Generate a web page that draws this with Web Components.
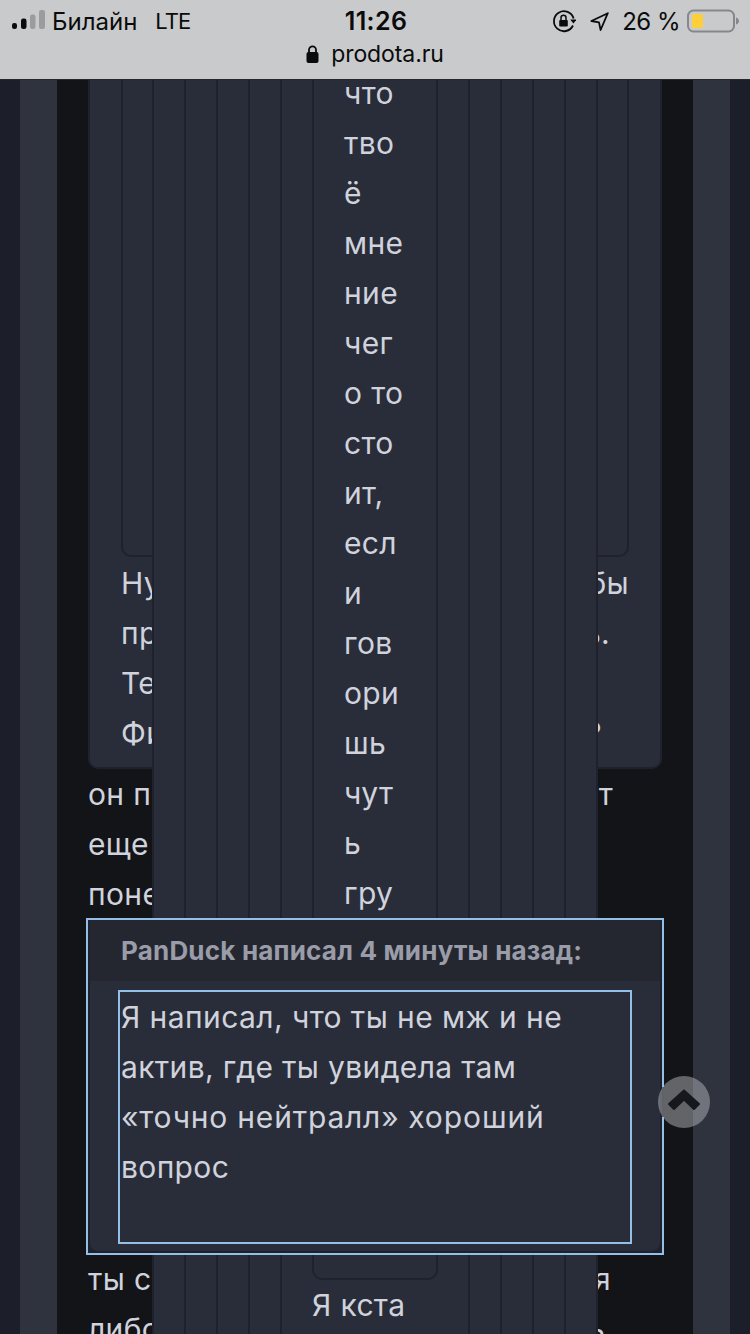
<!DOCTYPE html>
<html lang="ru">
<head>
<meta charset="utf-8">
<title>prodota.ru</title>
<style>
    html, body { margin: 0; padding: 0; background: #1c1f2a; }
    body { width: 750px; height: 1334px; overflow: hidden; font-family: Inter, "Liberation Sans", sans-serif; }
</style>
</head>
<body>
<status-bar></status-bar>
<forum-page>
    <quote-card>
        <text-line><span>Ну</span><span slot="end">бы</span></text-line>
        <text-line><span>пр</span><span slot="end" style="margin-right:19px">ь.</span></text-line>
        <text-line><span>Те</span></text-line>
        <text-line><span>Фи</span><span slot="end" style="margin-right:27px">?</span></text-line>
    </quote-card>
    <post-text>
        <text-line><span>он п</span><span slot="end" style="margin-right:49px">т</span></text-line>
        <text-line><span>еще</span></text-line>
        <text-line><span>поне</span></text-line>
        <text-line style="margin-top:335px"><span>ты с</span><span slot="end" style="margin-right:51px">я</span></text-line>
        <text-line><span>либо</span><span slot="end" style="margin-right:57px">ь</span></text-line>
    </post-text>

    <nest-stack slot="over">
        <nest-quote><nest-quote><nest-quote><nest-quote>
            <nest-quote class="last">
                что<br>тво<br>ё<br>мне<br>ние<br>чег<br>о то<br>сто<br>ит,<br>есл<br>и<br>гов<br>ори<br>шь<br>чут<br>ь<br>гру
            </nest-quote>
            <div style="line-height:50px">Я кста</div>
        </nest-quote></nest-quote></nest-quote></nest-quote>
    </nest-stack>

    <hover-quote slot="over" author="PanDuck написал 4 минуты назад:">
        <span style="letter-spacing:.42px">Я написал, что ты не мж и не</span><br>актив, где ты увидела там<br><span style="letter-spacing:.8px">«точно нейтралл»</span> <span style="letter-spacing:.9px">хороший</span><br>вопрос
    </hover-quote>
    <scroll-top slot="over"></scroll-top>
</forum-page>

<script>
// --- Status bar ---
class StatusBar extends HTMLElement {
    constructor() {
        super();
        this.attachShadow({ mode: 'open' });
        this.shadowRoot.innerHTML = `
            <style>
                :host { display: block; position: relative; z-index: 1; height: 79px; background: #c9cacb; color: #0b0b0c; font-size: 24px; box-shadow: 0 1px 0 #25272e; }
                .top { display: grid; grid-template-columns: 1fr auto 1fr; align-items: center; height: 42px; padding: 0 11px 0 12px; }
                .left, .right { display: flex; align-items: center; }
                .right { justify-content: flex-end; }
                .signal { margin-right: 7px; }
                .carrier { margin-right: 18px; }
                .net { font-size: 22px; letter-spacing: -1px; }
                .time { font-weight: 600; font-size: 25px; letter-spacing: .4px; padding-left: 1px; }
                .rot { margin-right: 14px; }
                .arrow { margin-right: 13px; }
                .pct { margin-right: 7px; letter-spacing: -0.5px; }
                svg { display: block; flex: none; }
                .url { display: flex; align-items: center; justify-content: center; gap: 12px; height: 24px; font-size: 23px; letter-spacing: -0.1px; }
            </style>
            <div class="top">
                <div class="left">
                    <svg class="signal" width="33" height="22" viewBox="0 0 33 22">
                        <rect x="0" y="13" width="5" height="6" rx="2.2" fill="#0b0b0c"/>
                        <rect x="9" y="8.5" width="5.5" height="10.5" rx="2.2" fill="#0b0b0c"/>
                        <rect x="18" y="4.500" width="5.500" height="14.500" rx="2.200" fill="#9b9c9d"/>
                        <rect x="27" y="0" width="6" height="19" rx="2.2" fill="#9b9c9d"/>
                    </svg>
                    <span class="carrier">Билайн</span>
                    <span class="net">LTE</span>
                </div>
                <span class="time">11:26</span>
                <div class="right">
                    <svg class="rot" width="24" height="24" viewBox="0 0 24 24" fill="none">
                        <path d="M21.600 9.500A10 10 0 1 0 21 16.500" stroke="#0b0b0c" stroke-width="1.800"/>
                        <path d="M18.200 10.500h6.400l-3.200 4z" fill="#0b0b0c"/>
                        <rect x="7.200" y="11" width="8.600" height="6.600" rx="1" fill="#0b0b0c"/>
                        <path d="M9 11V8.800a2.500 2.500 0 0 1 5 0V11" stroke="#0b0b0c" stroke-width="1.500"/>
                    </svg>
                    <svg class="arrow" width="19" height="19" viewBox="0 0 19 19" fill="none">
                        <path d="M17.800 1.200 1.400 9l7.600 1.400 1.600 7.600z" stroke="#0b0b0c" stroke-width="1.800" stroke-linejoin="round"/>
                    </svg>
                    <span class="pct">26 %</span>
                    <svg width="52" height="24" viewBox="0 0 52 24" fill="none">
                        <rect x="1" y="1.500" width="46" height="21" rx="5.500" stroke="#86878a" stroke-width="2"/>
                        <rect x="5" y="5" width="11" height="14" rx="1.500" fill="#fdd03b"/>
                        <path d="M49 8.500c2 .6 3 2 3 3.500s-1 2.900-3 3.500z" fill="#86878a"/>
                    </svg>
                </div>
            </div>
            <div class="url">
                <svg width="13" height="18" viewBox="0 0 13 18" fill="none">
                    <rect x="0.500" y="7" width="12" height="11" rx="2" fill="#0b0b0c"/>
                    <path d="M3 8V4.800a3.500 3.500 0 0 1 7 0V8" stroke="#0b0b0c" stroke-width="1.800"/>
                </svg>
                <span>prodota.ru</span>
            </div>`;
    }
}
customElements.define('status-bar', StatusBar);

// --- Page frame: strip, dark column and the overlay layer ---
class ForumPage extends HTMLElement {
    constructor() {
        super();
        this.attachShadow({ mode: 'open' });
        this.shadowRoot.innerHTML = `
            <style>
                :host { display: block; position: relative; height: 1255px; overflow: hidden; padding: 0 20px; box-sizing: border-box; color: #d0d2dc; font-size: 30px; letter-spacing: .35px; }
                .strip { background: #2f333e; padding: 0 37px; height: 100%; }
                .column { background: #131417; padding: 0 31px; height: 100%; }
            </style>
            <div class="strip"><div class="column"><slot></slot></div></div>
            <slot name="over"></slot>`;
    }
}
customElements.define('forum-page', ForumPage);

// --- Quote card with an inner quote cut off by the top of the screen ---
class QuoteCard extends HTMLElement {
    constructor() {
        super();
        this.attachShadow({ mode: 'open' });
        this.shadowRoot.innerHTML = `
            <style>
                :host { display: block; background: #292d39; border: 2px solid #1f222d; border-top: 0; border-radius: 0 0 10px 10px; padding: 0 31px 9px; }
                .inner { height: 478px; box-sizing: border-box; border: 2px solid #1f222d; border-top: 0; border-radius: 0 0 10px 10px; margin-bottom: 1px; }
            </style>
            <div class="inner"></div>
            <slot></slot>`;
    }
}
customElements.define('quote-card', QuoteCard);

class PostText extends HTMLElement {
    constructor() {
        super();
        this.attachShadow({ mode: 'open' });
        this.shadowRoot.innerHTML = `<style>:host { display: block; }</style><slot></slot>`;
    }
}
customElements.define('post-text', PostText);

// one line of text, its start and its end peek out from under the overlay
class TextLine extends HTMLElement {
    constructor() {
        super();
        this.attachShadow({ mode: 'open' });
        this.shadowRoot.innerHTML = `
            <style>
                :host { display: flex; justify-content: space-between; height: 50px; line-height: 50px; white-space: nowrap; }
            </style>
            <slot></slot><slot name="end"></slot>`;
    }
}
customElements.define('text-line', TextLine);

// --- Stack of nested quotes lying over the post ---
class NestStack extends HTMLElement {
    constructor() {
        super();
        this.attachShadow({ mode: 'open' });
        this.shadowRoot.innerHTML = `
            <style>
                :host { display: block; position: absolute; left: 152px; top: -11px; width: 446px; box-sizing: border-box; background: #292d39; border: solid #1f222d; border-width: 0 2px; padding: 0 30px 60px; }
            </style>
            <slot></slot>`;
    }
}
customElements.define('nest-stack', NestStack);

class NestQuote extends HTMLElement {
    constructor() {
        super();
        this.attachShadow({ mode: 'open' });
        this.shadowRoot.innerHTML = `
            <style>
                :host { display: block; border: solid #1f222d; border-width: 0 2px; padding: 0 30px 60px; }
                :host(.last) { border-bottom-width: 2px; border-radius: 0 0 10px 10px; padding-bottom: 360px; line-height: 50px; white-space: nowrap; }
            </style>
            <slot></slot>`;
    }
}
customElements.define('nest-quote', NestQuote);

// --- Quote preview with a focus outline ---
class HoverQuote extends HTMLElement {
    constructor() {
        super();
        this.attachShadow({ mode: 'open' });
        const author = this.getAttribute('author');
        this.shadowRoot.innerHTML = `
            <style>
                :host { display: block; position: absolute; left: 86px; top: 839px; width: 578px; height: 337px; box-sizing: border-box; border: 2px solid #94bfe9; background: #1f222d; }
                .card { display: flex; flex-direction: column; height: 100%; box-sizing: border-box; background: #292d39; border: 2px solid #1f222d; border-top: 0; border-radius: 0 0 10px 10px; }
                .head { background: #24272f; height: 61px; line-height: 61px; padding-left: 31px; font-size: 26px; letter-spacing: .2px; font-weight: 700; color: #9a9ca9; }
                .body { margin: 9px 28px 0; height: 254px; box-sizing: border-box; border: 2px solid #94bfe9; padding-left: 1px; line-height: 50px; }
            </style>
            <div class="card">
                <div class="head">${author}</div>
                <div class="body"><slot></slot></div>
            </div>`;
    }
}
customElements.define('hover-quote', HoverQuote);

// --- Scroll to top button ---
class ScrollTop extends HTMLElement {
    constructor() {
        super();
        this.attachShadow({ mode: 'open' });
        this.shadowRoot.innerHTML = `
            <style>
                :host { display: flex; align-items: center; justify-content: center; position: absolute; left: 658px; top: 997px; width: 52px; height: 52px; border-radius: 50%; background: rgba(178,180,184,.5); }
                :host::before { content: ''; position: absolute; left: 4px; top: 11px; width: 2px; height: 30px; background: #626366; }
                svg { display: block; margin-top: -4px; position: relative; }
            </style>
            <svg width="36" height="24" viewBox="0 0 36 24">
                <path d="M18 2.500 33 16 28 21 18 11.500 8 21 3 16z" fill="#17181e" stroke="#17181e" stroke-width="2" stroke-linejoin="round"/>
            </svg>`;
    }
}
customElements.define('scroll-top', ScrollTop);
</script>
</body>
</html>
